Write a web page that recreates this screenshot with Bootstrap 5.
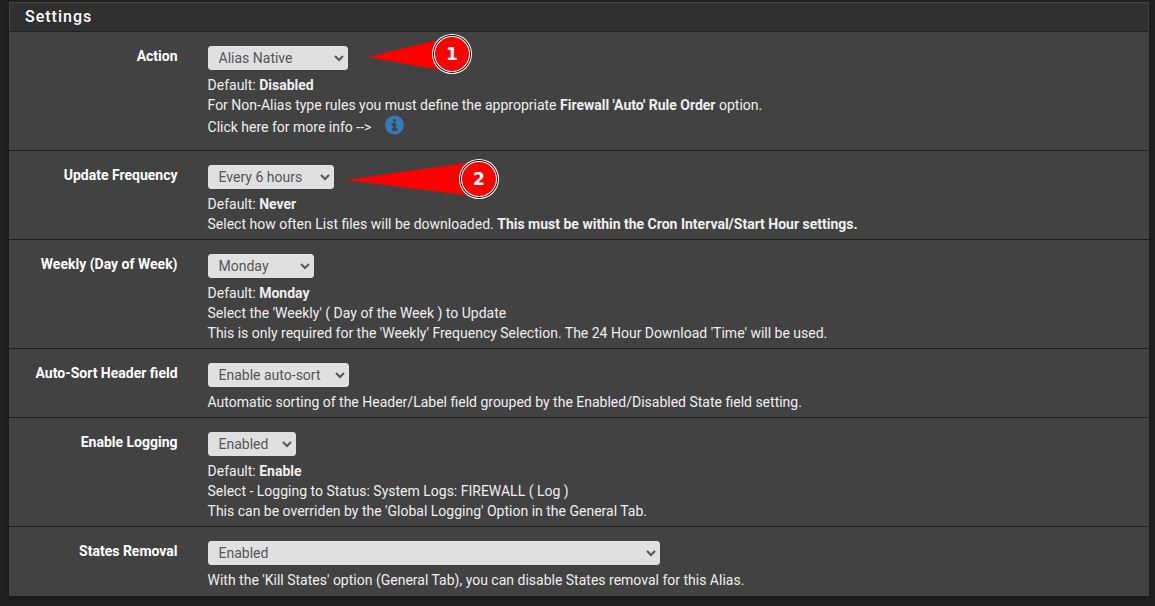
<!DOCTYPE html>
<html lang="en">
<head>
<meta charset="utf-8">
<meta name="viewport" content="width=device-width, initial-scale=1">
<title>Settings</title>
<link href="https://cdn.jsdelivr.net/npm/bootstrap@5.3.0/dist/css/bootstrap.min.css" rel="stylesheet">
<style>
  body { background: #212121; color: #efefef; font-family: Roboto, "Liberation Sans", sans-serif; font-size: 14px; line-height: 20px; }
  .panel { margin: 2px 6px 8px 9px; background: #424242; border-radius: 0; box-shadow: 0 2px 5px rgba(0,0,0,.35); }
  .panel-head { height: 30px; padding: 4px 15px; background: #303030; border: 1px solid #424242; border-bottom: 1px solid #212121; color: #fff; }
  .panel-head h2 { font-size: 16px; line-height: 20px; letter-spacing: 1px; font-weight: 500; }
  .setting { padding: 14px 0 5px; border-bottom: 1px solid #212121; }
  .setting:last-child { border-bottom: 0; padding-bottom: 6px; }
  .setting-name { flex: 0 0 16.1%; padding-right: 15px; text-align: right; font-weight: 700; color: #fff; }
  .setting-body { padding: 0 15px; min-width: 0; }
  .pick { display: block; height: 24px; padding: 0 6px; border: 1px solid #e0e0e0; border-radius: 3px; background-color: #e0e0e0; color: #555; font-size: 14px; max-width: 100%; }
  .pick-action { width: 140px; }
  .pick-freq { width: 126px; }
  .pick-day { width: 106px; }
  .pick-sort { width: 141px; }
  .pick-log { width: 88px; }
  .pick-states { width: 452px; }
  .help { margin-top: 5px; }
  .info-line { padding-bottom: 8px; }
  .info-text { padding-top: 2px; }
  .info-link { margin-left: 14px; line-height: 0; }
  .callout { position: absolute; top: 50%; left: 100%; transform: translateY(-50%); pointer-events: none; }
  .callout-1 { margin: -4px 0 0 20px; }
  .callout-2 { margin: 2px 0 0 12px; }
  .callout text { font: 700 17px "DejaVu Sans", sans-serif; fill: #fff; text-anchor: middle; }
</style>
</head>
<body>
<main class="panel">
  <header class="panel-head d-flex align-items-center"><h2 class="m-0">Settings</h2></header>
  <form>
    <div class="setting d-flex">
      <label class="setting-name" for="action">Action</label>
      <div class="setting-body flex-fill">
        <div class="position-relative d-inline-block align-top">
          <select class="pick pick-action" id="action"><option>Alias Native</option><option>Disabled</option></select>
          <svg class="callout callout-1" width="106" height="44" viewBox="0 0 106 44" role="img" aria-label="Step 1">
            <path d="M0 25 L78 6 L78 39 Z" fill="#f00"/>
            <circle cx="84" cy="22" r="20" fill="#fff"/><circle cx="84" cy="22" r="19" fill="#111"/><circle cx="84" cy="22" r="18" fill="#fff"/><circle cx="84" cy="22" r="17" fill="#f00"/>
            <text x="84" y="28">1</text>
          </svg>
        </div>
        <div class="help">
          <div>Default: <strong>Disabled</strong></div>
          <div>For Non-Alias type rules you must define the appropriate <strong>Firewall 'Auto' Rule Order</strong> option.</div>
          <div class="info-line d-flex">
            <span class="info-text">Click here for more info --&gt;</span>
            <a class="info-link" href="#info" aria-label="More information"><svg width="19" height="20" viewBox="0 0 20 20"><circle cx="10" cy="10" r="10" fill="#337ab7"/><path d="M8.5 4h3v2.5h-3zM7 8h4.5v5.5H13V16H7v-2.5h1.5v-3H7z" fill="#424242"/></svg></a>
          </div>
        </div>
      </div>
    </div>
    <div class="setting d-flex">
      <label class="setting-name" for="freq">Update Frequency</label>
      <div class="setting-body flex-fill">
        <div class="position-relative d-inline-block align-top">
          <select class="pick pick-freq" id="freq"><option>Every 6 hours</option><option>Never</option></select>
          <svg class="callout callout-2" width="156" height="44" viewBox="0 0 156 44" role="img" aria-label="Step 2">
            <path d="M0 23 L127 5 L127 39 Z" fill="#f00"/>
            <circle cx="133" cy="22" r="20" fill="#fff"/><circle cx="133" cy="22" r="19" fill="#111"/><circle cx="133" cy="22" r="18" fill="#fff"/><circle cx="133" cy="22" r="17" fill="#f00"/>
            <text x="133" y="28">2</text>
          </svg>
        </div>
        <div class="help">
          <div>Default: <strong>Never</strong></div>
          <div>Select how often List files will be downloaded. <strong>This must be within the Cron Interval/Start Hour settings.</strong></div>
        </div>
      </div>
    </div>
    <div class="setting d-flex">
      <label class="setting-name" for="day">Weekly (Day of Week)</label>
      <div class="setting-body flex-fill">
        <select class="pick pick-day" id="day"><option>Monday</option><option>Tuesday</option></select>
        <div class="help">
          <div>Default: <strong>Monday</strong></div>
          <div>Select the 'Weekly' ( Day of the Week ) to Update</div>
          <div>This is only required for the 'Weekly' Frequency Selection. The 24 Hour Download 'Time' will be used.</div>
        </div>
      </div>
    </div>
    <div class="setting d-flex">
      <label class="setting-name" for="sort">Auto-Sort Header field</label>
      <div class="setting-body flex-fill">
        <select class="pick pick-sort" id="sort"><option>Enable auto-sort</option></select>
        <div class="help">Automatic sorting of the Header/Label field grouped by the Enabled/Disabled State field setting.</div>
      </div>
    </div>
    <div class="setting d-flex">
      <label class="setting-name" for="log">Enable Logging</label>
      <div class="setting-body flex-fill">
        <select class="pick pick-log" id="log"><option>Enabled</option><option>Disabled</option></select>
        <div class="help">
          <div>Default: <strong>Enable</strong></div>
          <div>Select - Logging to Status: System Logs: FIREWALL ( Log )</div>
          <div>This can be overriden by the 'Global Logging' Option in the General Tab.</div>
        </div>
      </div>
    </div>
    <div class="setting d-flex">
      <label class="setting-name" for="states">States Removal</label>
      <div class="setting-body flex-fill">
        <select class="pick pick-states" id="states"><option>Enabled</option><option>Disabled</option></select>
        <div class="help">With the 'Kill States' option (General Tab), you can disable States removal for this Alias.</div>
      </div>
    </div>
  </form>
</main>
<script src="https://cdn.jsdelivr.net/npm/bootstrap@5.3.0/dist/js/bootstrap.bundle.min.js"></script>
</body>
</html>
